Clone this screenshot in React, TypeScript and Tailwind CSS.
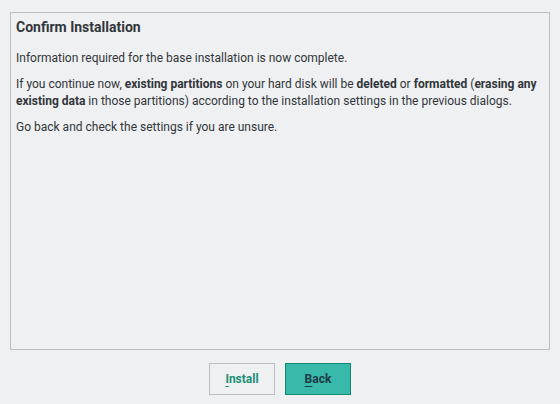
import React from 'react';

const App: React.FC = () => {
  return (
    <div
      className="w-[560px] h-[404px] bg-[#eff0f1] text-[#31363b] flex flex-col"
      style={{ fontFamily: 'Roboto, "Liberation Sans", sans-serif' }}
    >
      <div className="mx-[10px] mt-[12px] h-[338px] border border-[#bcbebf] px-[5px] pt-[5px]">
        <h1 className="text-[14px] font-bold leading-[18px]">Confirm Installation</h1>
        <div className="mt-[14px] text-[12px] leading-[17px] flex flex-col gap-[9px]">
          <p>Information required for the base installation is now complete.</p>
          <p>
            If you continue now, <b>existing partitions</b> on your hard disk will be <b>deleted</b> or{' '}
            <b>formatted</b> (<b>erasing any existing data</b> in those partitions) according to the
            installation settings in the previous dialogs.
          </p>
          <p>Go back and check the settings if you are unsure.</p>
        </div>
      </div>

      <div className="flex justify-center gap-[10px] mt-[13px]">
        <button className="w-[66px] h-[32px] border border-[#bcbebf] bg-[#eff0f1] text-[12px] font-bold text-[#1b8f78]">
          <span className="underline underline-offset-[3px]">I</span>nstall
        </button>
        <button className="w-[66px] h-[32px] border border-[#12896f] bg-[#38b9a9] text-[12px] font-bold text-[#1d3b4a]">
          <span className="underline underline-offset-[3px]">B</span>ack
        </button>
      </div>
    </div>
  );
};

export default App;
